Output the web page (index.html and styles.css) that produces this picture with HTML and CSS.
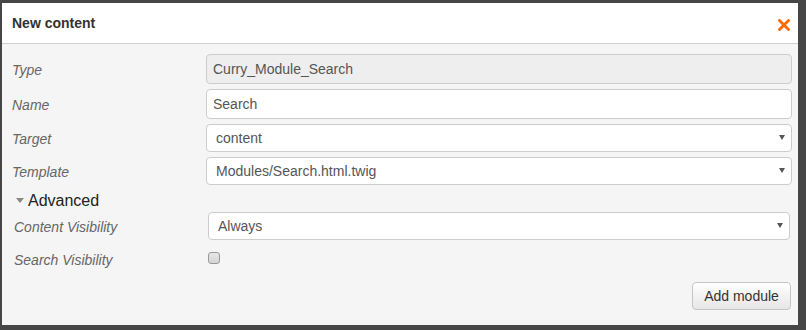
FILE: index.html
```html
<!DOCTYPE html>
<html>
<head>
<meta charset="utf-8">
<title>New content</title>
<link rel="stylesheet" href="styles.css">
</head>
<body>
  <div class="dialog">
    <div class="dialog-header">
      <h4 class="dialog-title">New content</h4>
      <button type="button" class="close" aria-label="Close">
        <svg width="12" height="12" viewBox="0 0 12 12"><path d="M1.5 1.5L10.5 10.5M10.5 1.5L1.5 10.5" stroke="#ff6a00" stroke-width="2.8" stroke-linecap="square"/></svg>
      </button>
    </div>
    <div class="dialog-body">
      <form class="module-form">
        <div class="form-row">
          <label>Type</label>
          <input type="text" value="Curry_Module_Search" disabled>
        </div>
        <div class="form-row">
          <label>Name</label>
          <input type="text" value="Search">
        </div>
        <div class="form-row">
          <label>Target</label>
          <span class="select-wrap"><select><option>content</option></select></span>
        </div>
        <div class="form-row">
          <label>Template</label>
          <span class="select-wrap"><select><option>Modules/Search.html.twig</option></select></span>
        </div>
        <div class="advanced">
          <div class="advanced-title"><span class="caret"></span>Advanced</div>
          <div class="form-row">
            <label>Content Visibility</label>
            <span class="select-wrap"><select><option>Always</option></select></span>
          </div>
          <div class="form-row check-row">
            <label>Search Visibility</label>
            <span><input type="checkbox" class="check"></span>
          </div>
        </div>
        <div class="form-actions">
          <button type="button" class="btn">Add module</button>
        </div>
      </form>
    </div>
  </div>
</body>
</html>
```

FILE: styles.css
```css
html, body { margin: 0; padding: 0; }
body { background: #464646; font-family: "Liberation Sans", Arial, Helvetica, sans-serif; width: 806px; height: 330px; overflow: hidden; }

.dialog { margin: 3px 0 0 2px; width: 796px; height: 322px; background: #f5f5f5; }
.dialog-header { height: 40px; background: #fff; border-bottom: 1px solid #cfcfcf; display: flex; align-items: center; justify-content: space-between; padding: 0 8px 0 10px; }
.dialog-title { margin: 0; font-size: 14px; font-weight: bold; color: #333; }
.close { border: 0; background: none; padding: 0; margin-top: 3px; width: 12px; height: 12px; display: block; }
.close svg { display: block; }

.dialog-body { padding: 10px 6px 0 10px; }
.form-row { display: grid; grid-template-columns: 194px 1fr; align-items: center; margin-bottom: 5px; }
.form-row label { font-size: 14px; font-style: italic; color: #666; padding-top: 1px; }

.form-row input[type=text], .form-row select { box-sizing: border-box; width: 100%; height: 30px; border: 1px solid #ccc; border-radius: 4px; background: #fff; font-family: inherit; font-size: 14px; color: #555; padding: 0 6px; margin: 0; outline: none; }
.form-row input[disabled] { background: #eee; color: #555; }

.select-wrap { position: relative; display: block; }
.form-row select { height: 28px; padding: 0 9px; -webkit-appearance: none; appearance: none; }
.select-wrap:after { content: ""; position: absolute; right: 7px; top: 11px; border-left: 3px solid transparent; border-right: 3px solid transparent; border-top: 5px solid #555; }

.advanced { padding: 0 2px; }
.advanced-title { height: 22px; line-height: 22px; font-size: 16px; color: #222; }
.caret { display: inline-block; vertical-align: middle; margin: 0 4px 3px 2px; border-left: 4px solid transparent; border-right: 4px solid transparent; border-top: 5px solid #888; }

.check-row { height: 28px; margin-bottom: 0; }
.check { -webkit-appearance: none; appearance: none; display: block; margin: 0 0 2px 0; width: 12px; height: 12px; border: 1px solid #999; border-radius: 3px; background: linear-gradient(#e8e8e8, #d4d4d4); box-sizing: border-box; }

.form-actions { display: flex; justify-content: flex-end; margin: 9px 1px 0 0; }
.btn { box-sizing: border-box; width: 99px; height: 28px; border: 1px solid #c5c5c5; border-radius: 4px; background: linear-gradient(#fff, #e6e6e6); font-family: inherit; font-size: 14px; color: #333; padding: 0; }
```
